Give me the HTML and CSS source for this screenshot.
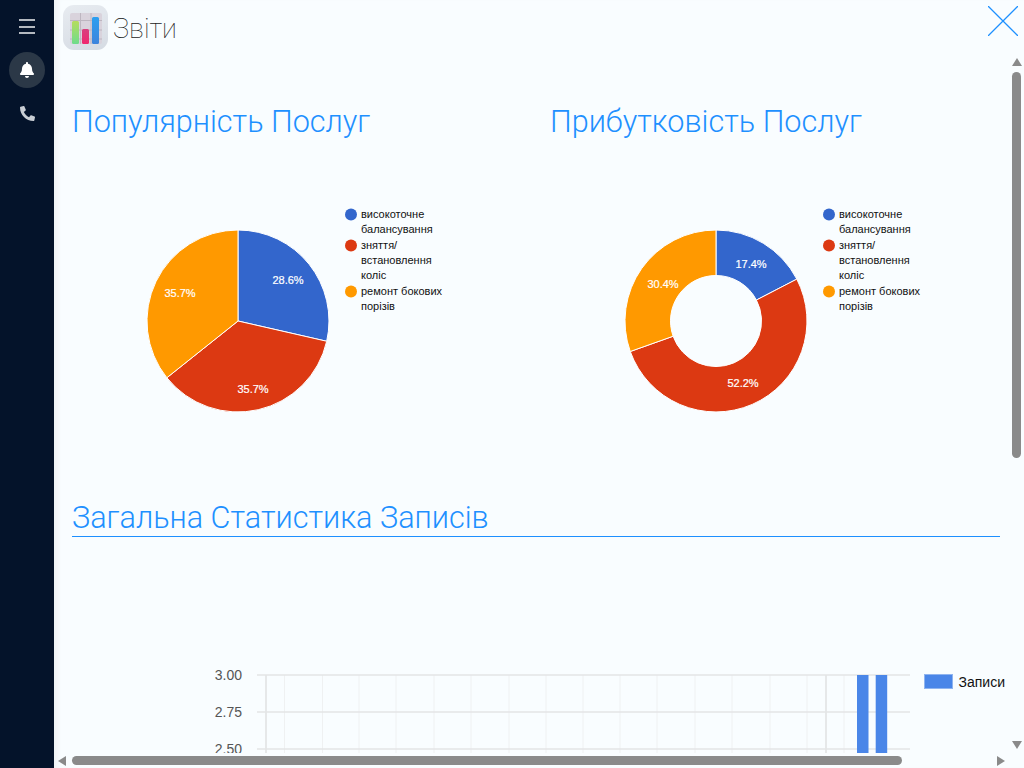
FILE: index.html
```html
<!DOCTYPE html>
<html lang="uk">
<head>
    <meta charset="UTF-8">
    <meta name="viewport" content="width=device-width, initial-scale=1.0">
    <title>Звіти</title>
    <link rel="stylesheet" href="styles.css">
</head>
<body>

<div class="app">
    <nav class="sidebar">
        <button type="button" class="menu-btn"><span></span><span></span><span></span></button>
        <a class="side-link active">
            <svg class="bell-icon" viewBox="0 0 448 512"><path d="M224 512c35.32 0 63.97-28.65 63.97-64H160.03c0 35.35 28.65 64 63.97 64zm215.39-149.71c-19.32-20.76-55.47-51.99-55.47-154.29 0-77.7-54.48-139.9-127.94-155.16V32c0-17.67-14.32-32-31.98-32s-31.98 14.33-31.98 32v20.84C118.56 68.1 64.08 130.3 64.08 208c0 102.3-36.15 133.53-55.47 154.29-6 6.45-8.66 14.16-8.61 21.71.11 16.4 12.98 32 32.1 32h383.8c19.12 0 32-15.6 32.1-32 .05-7.55-2.61-15.27-8.61-21.71z"/></svg>
        </a>
        <a class="side-link">
            <svg class="phone-icon" viewBox="0 0 512 512"><path transform="matrix(-1 0 0 1 512 0)" d="M493.4 24.6l-104-24c-11.3-2.6-22.9 3.3-27.5 13.9l-48 112c-4.2 9.8-1.4 21.3 6.9 28l60.6 49.6c-36 76.7-98.9 140.5-177.2 177.2l-49.6-60.6c-6.8-8.3-18.2-11.1-28-6.9l-112 48C3.9 366.5-2 378.1.6 389.4l24 104C27.1 504.2 36.7 512 48 512c256.1 0 464-207.5 464-464 0-11.2-7.7-20.9-18.6-23.4z"/></svg>
        </a>
    </nav>

    <main class="panel">
        <header class="panel-header">
            <div class="app-icon">
                <svg viewBox="0 0 45 45" width="45" height="45">
                    <defs>
                        <linearGradient id="barGreen" x1="0" y1="0" x2="0" y2="1"><stop offset="0" stop-color="#b5dc5c"/><stop offset="1" stop-color="#6fdc8c"/></linearGradient>
                        <linearGradient id="barPink" x1="0" y1="0" x2="0" y2="1"><stop offset="0" stop-color="#d8407f"/><stop offset="1" stop-color="#f0286f"/></linearGradient>
                        <linearGradient id="barBlue" x1="0" y1="0" x2="0" y2="1"><stop offset="0" stop-color="#2b9ff0"/><stop offset="1" stop-color="#3d84dc"/></linearGradient>
                    </defs>
                    <rect x="7" y="8" width="32" height="31" rx="2" fill="#d9d3dc"/>
                    <path d="M7 15.5h32M7 25h32M7 34h32M17.5 8v31M28 8v31" stroke="#bdb6c0" stroke-width="1"/>
                    <rect x="9" y="16" width="7" height="23" rx="1.5" fill="url(#barGreen)"/>
                    <rect x="19" y="24" width="7" height="15" rx="1.5" fill="url(#barPink)"/>
                    <rect x="29" y="12" width="7" height="27" rx="1.5" fill="url(#barBlue)"/>
                </svg>
            </div>
            <h1 class="panel-title">Звіти</h1>
            <button type="button" class="close-btn">
                <svg viewBox="0 0 30 30" width="30" height="30"><path d="M0 0L30 30M30 0L0 30" stroke="#1e90ff" stroke-width="1.3"/></svg>
            </button>
        </header>

        <div class="panel-body">
            <section class="pie-row">
                <div class="pie-col">
                    <h2 class="chart-title">Популярність Послуг</h2>
                    <svg class="pie-chart" width="478" height="300" viewBox="0 0 478 300">
                        <g stroke="#fff" stroke-width="1">
                            <path d="M166 151V60A91 91 0 0 1 254.7 171.25Z" fill="#3366cc"/>
                            <path d="M166 151L254.7 171.25A91 91 0 0 1 94.85 207.74Z" fill="#dc3912"/>
                            <path d="M166 151L94.85 207.74A91 91 0 0 1 166 60Z" fill="#ff9900"/>
                        </g>
                        <g class="slice-label">
                            <text x="216" y="114">28.6%</text>
                            <text x="181" y="223">35.7%</text>
                            <text x="108" y="127">35.7%</text>
                        </g>
                        <g class="legend">
                            <circle cx="279" cy="44.5" r="6" fill="#3366cc"/>
                            <text x="289" y="48">високоточне</text>
                            <text x="289" y="63">балансування</text>
                            <circle cx="279" cy="75.5" r="6" fill="#dc3912"/>
                            <text x="289" y="79">зняття/</text>
                            <text x="289" y="94">встановлення</text>
                            <text x="289" y="109">коліс</text>
                            <circle cx="279" cy="121.5" r="6" fill="#ff9900"/>
                            <text x="289" y="125">ремонт бокових</text>
                            <text x="289" y="140">порізів</text>
                        </g>
                    </svg>
                </div>
                <div class="pie-col">
                    <h2 class="chart-title">Прибутковість Послуг</h2>
                    <svg class="pie-chart" width="478" height="300" viewBox="0 0 478 300">
                        <g stroke="#fff" stroke-width="1">
                            <path d="M166 60A91 91 0 0 1 246.8 109.12L206.39 130.06A45.5 45.5 0 0 0 166 105.5Z" fill="#3366cc"/>
                            <path d="M246.8 109.12A91 91 0 1 1 80.26 181.49L123.13 166.24A45.5 45.5 0 1 0 206.39 130.06Z" fill="#dc3912"/>
                            <path d="M80.26 181.49A91 91 0 0 1 166 60V105.5A45.5 45.5 0 0 0 123.13 166.24Z" fill="#ff9900"/>
                        </g>
                        <g class="slice-label">
                            <text x="201" y="98">17.4%</text>
                            <text x="193" y="217">52.2%</text>
                            <text x="113" y="118">30.4%</text>
                        </g>
                        <g class="legend">
                            <circle cx="279" cy="44.5" r="6" fill="#3366cc"/>
                            <text x="289" y="48">високоточне</text>
                            <text x="289" y="63">балансування</text>
                            <circle cx="279" cy="75.5" r="6" fill="#dc3912"/>
                            <text x="289" y="79">зняття/</text>
                            <text x="289" y="94">встановлення</text>
                            <text x="289" y="109">коліс</text>
                            <circle cx="279" cy="121.5" r="6" fill="#ff9900"/>
                            <text x="289" y="125">ремонт бокових</text>
                            <text x="289" y="140">порізів</text>
                        </g>
                    </svg>
                </div>
            </section>

            <section class="stats">
                <h2 class="stats-title">Загальна Статистика Записів</h2>
                <svg class="bar-chart" width="952" height="300" viewBox="0 0 952 300">
                    <g class="grid-minor">
                        <path d="M212.5 35V120M250.5 35V120M287 35V120M324 35V120M362 35V120M399 35V120M437 35V120M474 35V120M511 35V120M548 35V120M585 35V120M623 35V120M660 35V120M698 35V120M735 35V120M772 35V120"/>
                    </g>
                    <path class="grid-axis" d="M194 35V120M754 35V120"/>
                    <path class="grid-major" d="M185 35H838M185 72H838M185 109H838"/>
                    <rect class="bar" x="785" y="35" width="11.5" height="85"/>
                    <rect class="bar" x="803.7" y="35" width="11.5" height="85"/>
                    <g class="tick">
                        <text x="170" y="40">3.00</text>
                        <text x="170" y="77">2.75</text>
                        <text x="170" y="114">2.50</text>
                    </g>
                    <rect class="bar bar-key" x="852.5" y="34.5" width="28" height="14"/>
                    <text class="bar-legend" x="886.5" y="47">Записи</text>
                </svg>
            </section>
        </div>

        <div class="scroll-y">
            <i class="arrow arrow-up"></i>
            <i class="thumb-y"></i>
            <i class="arrow arrow-down"></i>
        </div>
        <div class="scroll-x">
            <i class="arrow arrow-left"></i>
            <i class="thumb-x"></i>
            <i class="arrow arrow-right"></i>
        </div>
    </main>
</div>

</body>
</html>
```

FILE: styles.css
```css
:root {
    --blue: #1e90ff;
    --dark: #04132a;
    --page: #f9fdff;
    --scroll: #8a8a8a;
}
* { margin: 0; padding: 0; box-sizing: border-box; }
html, body { height: 100%; overflow: hidden; }
body { font-family: Roboto, "Liberation Sans", sans-serif; background: var(--page); }

.app { display: flex; height: 768px; }

.sidebar {
    width: 54px;
    flex-shrink: 0;
    background: var(--dark);
    display: flex;
    flex-direction: column;
    align-items: center;
    padding-top: 19px;
}
.menu-btn { width: 16px; height: 15px; background: none; border: none; display: flex; flex-direction: column; justify-content: space-between; margin-bottom: 18px; }
.menu-btn span { display: block; height: 2px; background: #b4b9c0; }
.side-link { width: 36px; height: 36px; border-radius: 50%; display: flex; align-items: center; justify-content: center; margin-bottom: 7px; }
.side-link.active { background: #2b3847; }
.bell-icon { width: 14px; height: 16px; fill: #fff; }
.phone-icon { width: 15px; height: 15px; fill: #c9ced4; }

.panel { flex: 1; position: relative; display: flex; flex-direction: column; height: 768px; padding-bottom: 15px; box-shadow: inset 6px 0 6px -4px #eef0f3; min-width: 0; }
.panel-header { height: 56px; flex-shrink: 0; display: flex; align-items: flex-start; padding: 5px 6px 0 9px; }
.app-icon { width: 45px; height: 45px; border-radius: 11px; background: linear-gradient(160deg, #e8ecf1, #d5dbe3); overflow: hidden; }
.panel-title { font-size: 27px; font-weight: 100; color: #222; margin: 6px 0 0 5px; line-height: 36px; }
.close-btn { margin-left: auto; margin-top: 1px; background: none; border: none; width: 30px; height: 30px; }

.panel-body { flex: 1; overflow: hidden; padding: 44px 24px 0 18px; }
.pie-row { display: flex; }
.pie-col { width: 478px; flex-shrink: 0; }
.chart-title { font-size: 30.6px; font-weight: 300; color: var(--blue); line-height: 44px; height: 70px; }
.pie-chart { display: block; }
.slice-label text { font-family: "Liberation Sans", sans-serif; font-size: 11px; fill: #fff; text-anchor: middle; stroke: #fff; stroke-width: 0.2; }
.legend text { font-family: "Liberation Sans", sans-serif; font-size: 11px; fill: #111; }

.stats { margin-top: 30px; }
.stats-title { font-size: 30.6px; font-weight: 300; color: var(--blue); line-height: 36px; border-bottom: 1px solid var(--blue); width: 928px; }
.bar-chart { display: block; margin-top: 103px; }
.grid-minor path { stroke: #eff1f2; stroke-width: 1; fill: none; }
.grid-axis { stroke: #dfe1e2; stroke-width: 1.5; fill: none; }
.grid-major { stroke: #e3e5e6; stroke-width: 1.5; fill: none; }
.bar { fill: #4a86e8; }
.bar-key { stroke: #8fb4ef; stroke-width: 1; }
.tick text { font-family: "Liberation Sans", sans-serif; font-size: 14px; fill: #555; text-anchor: end; }
.bar-legend { font-family: "Liberation Sans", sans-serif; font-size: 14px; fill: #111; }

.scroll-y { position: absolute; right: 3px; top: 58px; bottom: 19px; width: 9px; display: flex; flex-direction: column; align-items: center; }
.thumb-y { display: block; width: 9px; height: 386px; margin-top: 6px; background: var(--scroll); border-radius: 5px; }
.scroll-y .arrow-down { margin-top: auto; }
.scroll-x { position: absolute; left: 4px; right: 19px; bottom: 3px; height: 9px; display: flex; align-items: center; }
.thumb-x { display: block; height: 9px; width: 830px; margin-left: 6px; background: var(--scroll); border-radius: 5px; }
.scroll-x .arrow-right { margin-left: auto; }

.arrow { display: block; width: 0; height: 0; flex-shrink: 0; }
.arrow-up { border-left: 5px solid transparent; border-right: 5px solid transparent; border-bottom: 8px solid var(--scroll); }
.arrow-down { border-left: 5px solid transparent; border-right: 5px solid transparent; border-top: 8px solid var(--scroll); }
.arrow-left { border-top: 5px solid transparent; border-bottom: 5px solid transparent; border-right: 8px solid var(--scroll); }
.arrow-right { border-top: 5px solid transparent; border-bottom: 5px solid transparent; border-left: 8px solid var(--scroll); }
```
